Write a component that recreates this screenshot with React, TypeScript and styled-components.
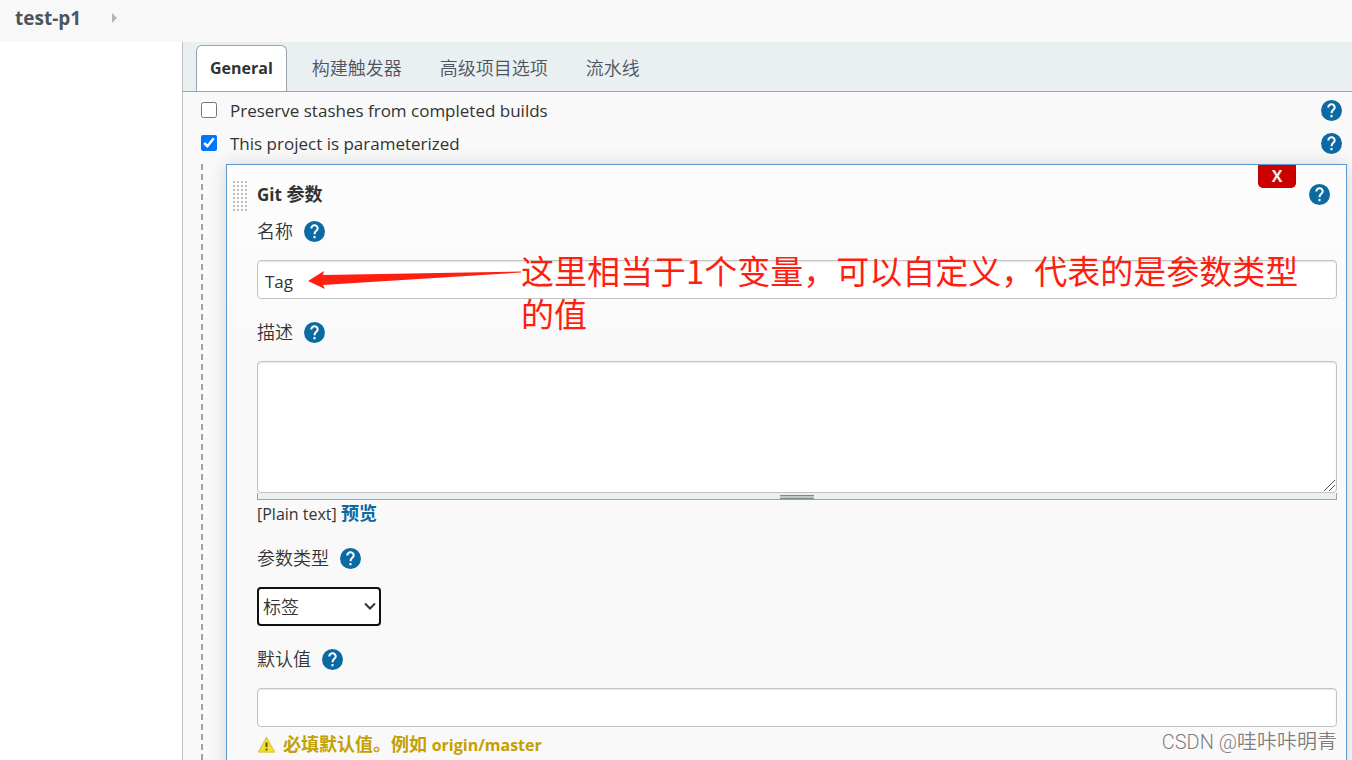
import React from 'react';
import styled, { createGlobalStyle, css } from 'styled-components';

const sans = '"Open Sans", "Noto Sans CJK SC", sans-serif';

const GlobalStyle = createGlobalStyle`
  *, *::before, *::after { box-sizing: border-box; }
  html, body, #root { height: 100%; }
  body {
    margin: 0;
    overflow: hidden;
    background: #fff;
    color: #333;
    font: 350 18px/24px ${sans};
  }
  button, input, textarea, select { font: inherit; color: inherit; }
`;

const Page = styled.div`
  position: relative;
  height: 100vh;
  overflow: hidden;
  display: flex;
  flex-direction: column;
`;

const Breadcrumbs = styled.nav`
  flex: none;
  display: flex;
  align-items: center;
  gap: 30px;
  height: 42px;
  padding: 0 15px 7px;
  background: #f8f8f8;
`;

const Crumb = styled.a`
  color: #4d545d;
  font: 700 19px/24px ${sans};
  text-decoration: none;
`;

const Columns = styled.div`
  flex: 1;
  min-height: 0;
  display: grid;
  grid-template-columns: 182px minmax(0, 1fr);
`;

const SidePanel = styled.aside`
  background: #fff;
`;

const Main = styled.main`
  min-height: 0;
  overflow: hidden;
  border-left: 1px solid #bfbfbf;
  background: #f9f9f9;
`;

const TabBar = styled.div`
  display: flex;
  align-items: flex-end;
  height: 50px;
  padding-left: 13px;
  background: #eaeff2;
  border-bottom: 1px solid #98a4ae;
`;

const Tab = styled.button<{ $active?: boolean }>`
  height: 46px;
  padding: 0 12px 2px;
  margin-right: 12px;
  border: 1px solid transparent;
  border-bottom: 0;
  border-radius: 6px 6px 0 0;
  background: none;
  color: #4d545d;
  white-space: nowrap;
  ${(p) =>
    p.$active &&
    css`
      padding: 0 13px 1px;
      background: #fff;
      border-color: #98a4ae;
      color: #333;
      font-size: 16px;
      font-weight: 700;
    `}
`;

const Form = styled.form`
  padding: 2px 5px 0 18px;
`;

const OptionRow = styled.div`
  display: flex;
  align-items: center;
  justify-content: space-between;
  height: 33px;
  padding-right: 5px;
`;

const OptionLabel = styled.label`
  display: flex;
  align-items: center;
  gap: 13px;
  font: 500 17px/24px ${sans};
`;

const Checkbox = styled.input`
  width: 16px;
  height: 16px;
  margin: 0 0 2px;
`;

const HelpButton = styled.button`
  display: inline-flex;
  flex: none;
  padding: 0;
  border: 0;
  background: none;
`;

const Nested = styled.div`
  display: flex;
  padding-top: 4px;
`;

const DashedRail = styled.div`
  flex: none;
  width: 2px;
  margin-right: 23px;
  background: repeating-linear-gradient(#a3a3a3 0 6px, transparent 6px 10px);
`;

const Card = styled.section`
  position: relative;
  flex: 1;
  min-width: 0;
  padding: 14px 9px 40px 6px;
  border: 1px solid #5c97cf;
  background: linear-gradient(#fdfdfd, #f9f9f9 180px);
  box-shadow: 0 0 16px rgba(0, 0, 0, 0.14);
`;

const CardHead = styled.div`
  display: flex;
  align-items: center;
  gap: 10px;
  height: 30px;
  padding-right: 7px;
`;

const CardTitle = styled.h2`
  flex: 1;
  margin: 0;
  font: 700 18px/24px ${sans};
`;

const Latin = styled.span<{ $size: number }>`
  font-size: ${(p) => p.$size}px;
`;

const RemoveButton = styled.button`
  position: absolute;
  top: 0;
  right: 50px;
  width: 38px;
  height: 23px;
  padding: 0;
  border: 1px solid #b00;
  border-top: 0;
  border-radius: 0 0 5px 5px;
  background: #c00;
  color: #eee;
  font: 700 16px/20px ${sans};
`;

const Fields = styled.div`
  display: flex;
  flex-direction: column;
  gap: 21px;
  padding: 10px 0 0 24px;
`;

const FieldLabel = styled.div`
  display: flex;
  align-items: center;
  gap: 11px;
  height: 24px;
  margin-bottom: 17px;
`;

const control = css`
  display: block;
  border: 1px solid #c3c3c3;
  border-radius: 4px;
  background: #fff;
  outline: 0;
`;

const TextInput = styled.input`
  ${control}
  width: 100%;
  height: 39px;
  padding: 4px 7px 0;
  box-shadow: inset 0 1px 2px rgba(0, 0, 0, 0.1);
  font-size: 17px;
  font-weight: 400;
`;

const TextAreaWrap = styled.div`
  position: relative;
`;

const TextArea = styled.textarea`
  ${control}
  width: 100%;
  height: 132px;
  resize: none;
  box-shadow: inset 0 1px 2px rgba(0, 0, 0, 0.1);
`;

const Corner = styled.svg`
  position: absolute;
  right: 2px;
  bottom: 2px;
`;

const ResizeBar = styled.div`
  display: flex;
  justify-content: center;
  align-items: flex-end;
  height: 7px;
  border: 1px solid #98a4ae;
  border-top: 0;
  background: #eaeff2;
`;

const ResizeGrip = styled.span`
  width: 34px;
  height: 4px;
  border: solid #7f8b85;
  border-width: 1px 0;
  background: #c0c8c4;
`;

const Preview = styled.div`
  height: 24px;
  margin-top: 1px;
  font-size: 16px;
  font-weight: 400;
`;

const PreviewLink = styled.a`
  color: #0b6aa2;
  font-size: 18px;
  font-weight: 700;
  text-decoration: none;
`;

const SelectWrap = styled.div`
  position: relative;
  width: 124px;
`;

const Select = styled.select`
  ${control}
  appearance: none;
  width: 100%;
  height: 39px;
  padding: 0 0 0 4px;
  border: 2px solid #101010;
`;

const Chevron = styled.svg`
  position: absolute;
  right: 5px;
  top: 15px;
  pointer-events: none;
`;

const Warning = styled.div`
  display: flex;
  align-items: center;
  gap: 7px;
  height: 24px;
  margin-top: 5px;
  color: #c4a000;
  font-weight: 700;
`;

const Annotation = styled.div`
  position: absolute;
  top: 84px;
  left: 81px;
  right: 40px;
  display: flex;
  pointer-events: none;
`;

const Arrow = styled.svg`
  flex: none;
  margin-top: 21px;
`;

const Note = styled.p`
  margin: 0;
  color: #ff1f10;
  font: 400 33px/43px "Noto Sans CJK SC", sans-serif;
`;

const Watermark = styled.div`
  position: absolute;
  right: 15px;
  bottom: 3px;
  color: #7e7e7e;
  font: 350 20px/30px Roboto, "Noto Sans CJK SC", sans-serif;
  text-shadow: 1px 1px 0 #fff;
`;

function Help({ topic }: { topic: string }) {
  return (
    <HelpButton type="button" aria-label={`Help: ${topic}`}>
      <svg width="21" height="21" viewBox="0 0 21 21" aria-hidden="true">
        <circle cx="10.5" cy="10.5" r="10.5" fill="#0b6aa2" />
        <path
          d="M7.300 7.400a3.200 3.200 0 0 1 6.400 0c0 2.400-3.200 2.600-3.200 5.800"
          fill="none"
          stroke="#fff"
          strokeWidth="2"
        />
        <rect x="9.500" y="15" width="2" height="2.300" fill="#fff" />
      </svg>
    </HelpButton>
  );
}

function DragHandle() {
  const dots = [];
  for (let y = 0; y < 8; y += 1) {
    for (let x = 0; x < 4; x += 1) {
      dots.push(
        <g key={`${x}-${y}`} transform={`translate(${x * 4} ${y * 4 + 4})`}>
          <rect width="2" height="2" fill="#cfcfca" />
          <rect x="1" width="1" height="1" fill="#adada8" />
          <rect y="1" width="1" height="1" fill="#adada8" />
        </g>,
      );
    }
  }
  return (
    <svg width="14" height="34" viewBox="0 0 14 34" aria-hidden="true">
      {dots}
    </svg>
  );
}

function Field({ id, label, children }: { id: string; label: string; children: React.ReactNode }) {
  return (
    <div>
      <FieldLabel>
        <label htmlFor={id}>{label}</label>
        <Help topic={label} />
      </FieldLabel>
      {children}
    </div>
  );
}

function Option({ label, checked }: { label: string; checked?: boolean }) {
  return (
    <OptionRow>
      <OptionLabel>
        <Checkbox type="checkbox" defaultChecked={checked} />
        {label}
      </OptionLabel>
      <Help topic={label} />
    </OptionRow>
  );
}

export default function App() {
  return (
    <Page>
      <GlobalStyle />
      <Breadcrumbs>
        <Crumb href="#project">test-p1</Crumb>
        <svg width="6" height="10" viewBox="0 0 6 10" aria-hidden="true">
          <path d="M1 0 6 5 1 10Z" fill="#b5b5b5" />
        </svg>
      </Breadcrumbs>
      <Columns>
        <SidePanel />
        <Main>
          <TabBar role="tablist">
            <Tab type="button" role="tab" aria-selected $active>General</Tab>
            <Tab type="button" role="tab">构建触发器</Tab>
            <Tab type="button" role="tab">高级项目选项</Tab>
            <Tab type="button" role="tab">流水线</Tab>
          </TabBar>
          <Form>
            <Option label="Preserve stashes from completed builds" />
            <Option label="This project is parameterized" checked />
            <Nested>
              <DashedRail />
              <Card>
                <CardHead>
                  <DragHandle />
                  <CardTitle>
                    <Latin $size={17}>Git</Latin> 参数
                  </CardTitle>
                  <Help topic="Git 参数" />
                </CardHead>
                <RemoveButton type="button">X</RemoveButton>
                <Fields>
                  <Field id="name" label="名称">
                    <TextInput id="name" defaultValue="Tag" />
                  </Field>
                  <Field id="description" label="描述">
                    <TextAreaWrap>
                      <TextArea id="description" />
                      <Corner width="11" height="11" viewBox="0 0 11 11" aria-hidden="true">
                        <path d="M0 11 11 0M5 11 11 5" stroke="#555" strokeWidth="1" />
                      </Corner>
                    </TextAreaWrap>
                    <ResizeBar>
                      <ResizeGrip />
                    </ResizeBar>
                    <Preview>
                      [Plain text] <PreviewLink href="#preview">预览</PreviewLink>
                    </Preview>
                  </Field>
                  <Field id="type" label="参数类型">
                    <SelectWrap>
                      <Select id="type" defaultValue="tag">
                        <option value="tag">标签</option>
                      </Select>
                      <Chevron width="12" height="9" viewBox="0 0 12 9" aria-hidden="true">
                        <path d="M1 1.500 6 6.500 11 1.500" fill="none" stroke="#333" strokeWidth="2" />
                      </Chevron>
                    </SelectWrap>
                  </Field>
                  <Field id="default" label="默认值">
                    <TextInput id="default" />
                    <Warning>
                      <svg width="19" height="18" viewBox="0 0 19 18" aria-hidden="true">
                        <path
                          d="M9.500 2.500 17.500 17H1.500Z"
                          fill="#f5e02e"
                          stroke="#dccb50"
                          strokeWidth="1.500"
                          strokeLinejoin="round"
                        />
                        <path d="M9.500 7.500v4.500M9.500 13.500v2" stroke="#54501c" strokeWidth="2" />
                      </svg>
                      <span>
                        必填默认值。例如 <Latin $size={16}>origin/master</Latin>
                      </span>
                    </Warning>
                  </Field>
                </Fields>
                <Annotation>
                  <Arrow width="213" height="20" viewBox="0 0 213 20" aria-hidden="true">
                    <path d="M0 11 16 1 15 5 213 1.500V2.500L15 15 17 19Z" fill="#ff1f10" />
                  </Arrow>
                  <Note>这里相当于1个变量，可以自定义，代表的是参数类型的值</Note>
                </Annotation>
              </Card>
            </Nested>
          </Form>
        </Main>
      </Columns>
      <Watermark>CSDN @哇咔咔明青</Watermark>
    </Page>
  );
}
